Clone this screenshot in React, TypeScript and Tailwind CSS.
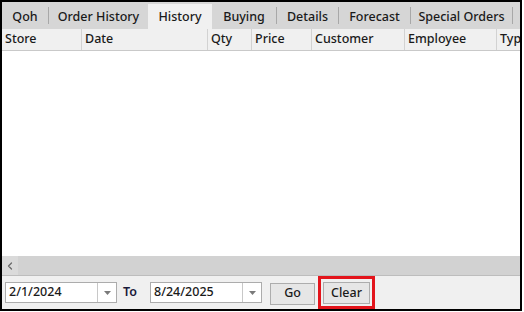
import { ChevronLeft } from 'lucide-react';

const tabs = [
  { label: 'Qoh', w: 'w-[46px]' },
  { label: 'Order History', w: 'w-[99px]' },
  { label: 'History', w: 'w-[64px]', active: true },
  { label: 'Buying', w: 'w-[64px]' },
  { label: 'Details', w: 'w-[61px]' },
  { label: 'Forecast', w: 'w-[71px]' },
  { label: 'Special Orders', w: 'w-[101px]' },
];

const columns = [
  { label: 'Store', w: 'w-[80px]' },
  { label: 'Date', w: 'w-[126px]' },
  { label: 'Qty', w: 'w-[44px]' },
  { label: 'Price', w: 'w-[60px]' },
  { label: 'Customer', w: 'w-[93px]' },
  { label: 'Employee', w: 'w-[92px]' },
  { label: 'Type', w: 'w-[40px]' },
];

function DateBox({ value, className }: { value: string; className: string }) {
  return (
    <div className={`flex h-[21px] items-stretch border border-[#acacac] bg-white ${className}`}>
      <div className="flex flex-1 items-center pl-[3px] text-[12.5px] font-medium text-[#1a1a1a]">{value}</div>
      <div className="flex w-[19px] items-center justify-center border-l border-[#c8c8c8]">
        <svg width="7" height="4" viewBox="0 0 7 4">
          <path d="M0 0h7L3.5 4z" fill="#7a7a7a" />
        </svg>
      </div>
    </div>
  );
}

export default function App() {
  return (
    <div className="h-[312px] w-[524px] bg-white" style={{ fontFamily: '"Noto Sans", "Open Sans", sans-serif' }}>
      <div className="flex h-[311px] w-[522px] flex-col border-2 border-black">
        {/* tab strip */}
        <div className="flex h-[27px] shrink-0 items-end overflow-hidden bg-[#d6d6d6]">
          {tabs.map((tab, i) => {
            const next = tabs[i + 1];
            const showSep = !tab.active && !next?.active;
            return (
              <div key={tab.label} className="flex h-[25px] items-center">
                <div
                  className={`flex h-[25px] ${tab.w} items-center justify-center pt-[2px] text-[12.5px] font-medium text-[#1a1a1a] ${
                    tab.active ? 'bg-[#f0f0f0]' : ''
                  }`}
                >
                  {tab.label}
                </div>
                {showSep && <div className="mb-[2px] h-[17px] w-px bg-[#a8a8a8]" />}
              </div>
            );
          })}
        </div>

        {/* column header */}
        <div className="flex h-[22px] shrink-0 overflow-hidden border-b border-[#c9c9c9] bg-[#f0f0f0]">
          {columns.map((col) => (
            <div
              key={col.label}
              className={`flex shrink-0 items-center border-r border-[#d2d2d2] pl-[3px] text-[12.5px] font-medium text-[#1a1a1a] ${col.w}`}
            >
              {col.label}
            </div>
          ))}
        </div>

        {/* grid body */}
        <div className="flex-1 bg-white" />

        {/* horizontal scrollbar */}
        <div className="flex h-[20px] shrink-0 border-b border-[#bdbdbd] bg-[#d2d2d2]">
          <div className="flex w-[16px] items-center justify-center bg-[#dadada]">
            <ChevronLeft size={12} strokeWidth={2.6} color="#6a6a6a" />
          </div>
        </div>

        {/* date filter */}
        <div className="flex h-[33px] shrink-0 items-center bg-[#f0f0f0] pl-[3px]">
          <DateBox value="2/1/2024" className="w-[112px]" />
          <span className="ml-[6px] w-[27px] text-[12.5px] font-semibold text-[#1a1a3a]">To</span>
          <DateBox value="8/24/2025" className="w-[112px]" />
          <button className="ml-[8px] mt-[2px] h-[22px] w-[45px] border border-[#adadad] bg-[#e6e6e6] text-[12.5px] font-medium text-[#1a1a1a]">
            Go
          </button>
          <div className="ml-[3px] flex h-[33px] w-[57px] items-center justify-center border-[3px] border-[#e3141b]">
            <button className="mt-[1px] h-[22px] w-[47px] border border-[#adadad] bg-[#e6e6e6] text-[12.5px] font-medium text-[#1a1a1a]">
              Clear
            </button>
          </div>
        </div>
      </div>
    </div>
  );
}
